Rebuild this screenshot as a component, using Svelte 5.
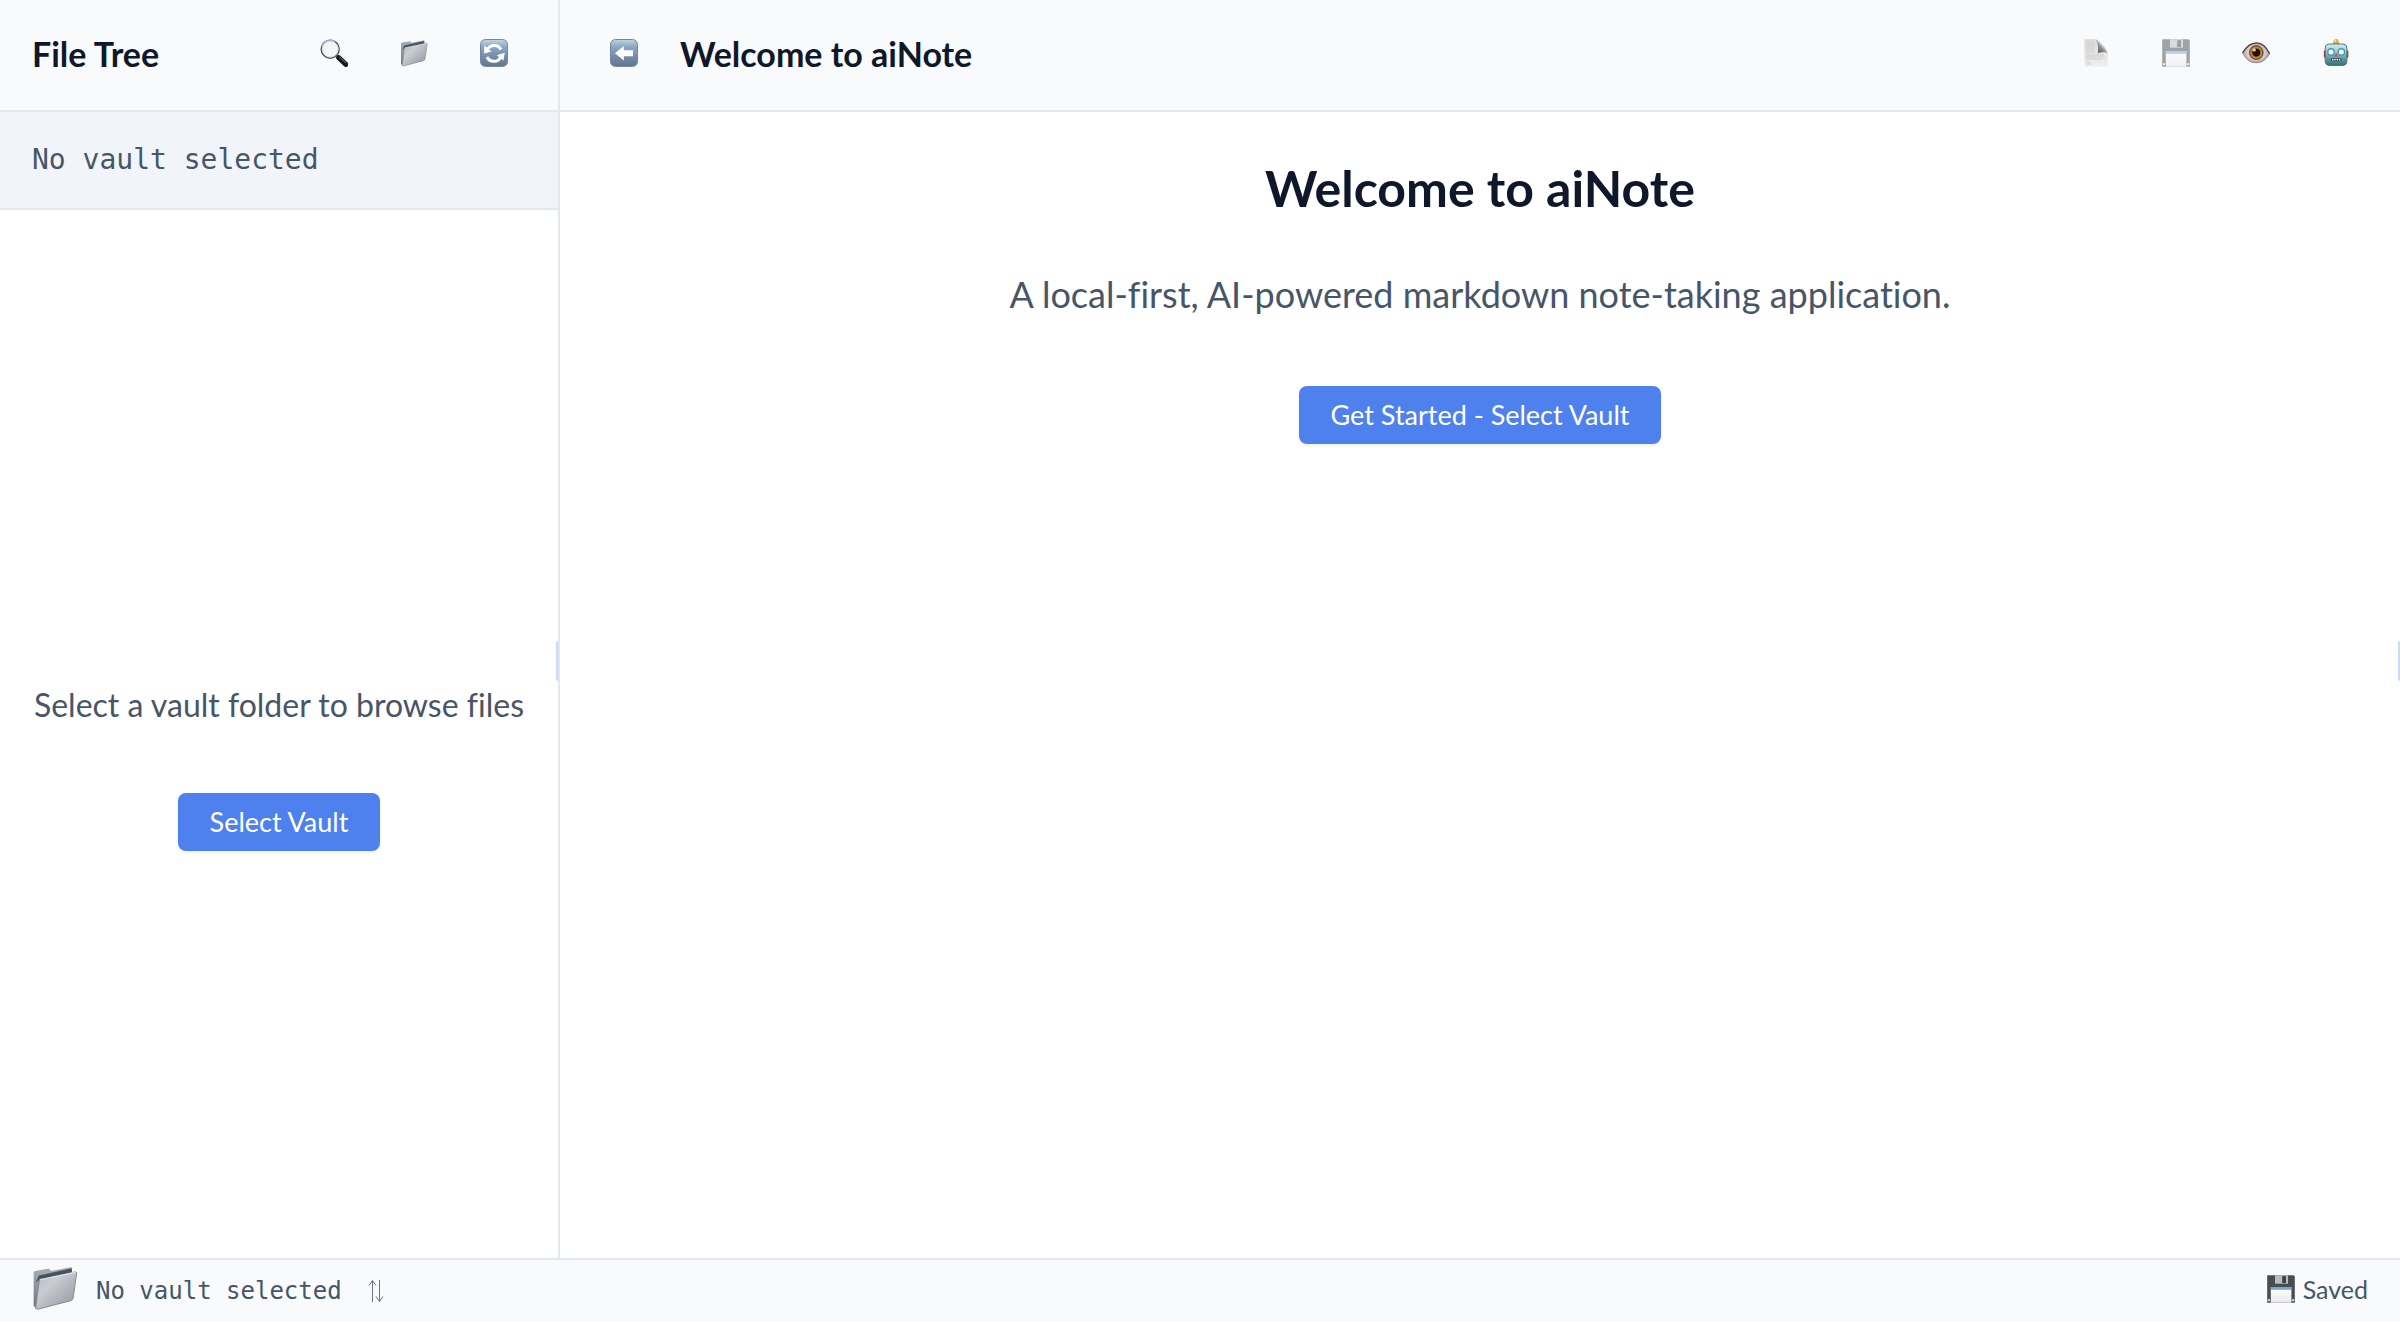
<script>
  let preview = $state(false);
</script>

<svg class="defs" aria-hidden="true">
  <defs>
    <linearGradient id="tile" x1="0" y1="0" x2="0" y2="1">
      <stop offset="0" stop-color="#c3d5e2" />
      <stop offset="0.14" stop-color="#a5bed4" />
      <stop offset="0.28" stop-color="#8ba6c5" />
      <stop offset="0.6" stop-color="#788eac" />
      <stop offset="1" stop-color="#647690" />
    </linearGradient>
    <linearGradient id="folderFront" x1="0" y1="0" x2="1" y2="1">
      <stop offset="0" stop-color="#b4b9bf" />
      <stop offset="0.35" stop-color="#c9ccd3" />
      <stop offset="1" stop-color="#8f9499" />
    </linearGradient>
    <linearGradient id="folderBack" x1="0" y1="0" x2="0" y2="1">
      <stop offset="0" stop-color="#a8b1b8" />
      <stop offset="1" stop-color="#6c757e" />
    </linearGradient>
    <linearGradient id="sheet" x1="0" y1="0" x2="0" y2="1">
      <stop offset="0" stop-color="#dcdcdc" />
      <stop offset="1" stop-color="#efefef" />
    </linearGradient>
    <linearGradient id="curl" x1="0" y1="1" x2="1" y2="0">
      <stop offset="0" stop-color="#4c4c4c" />
      <stop offset="0.45" stop-color="#8d8d8d" />
      <stop offset="0.6" stop-color="#e6e6e6" />
      <stop offset="1" stop-color="#f4f4f4" />
    </linearGradient>
    <linearGradient id="label" x1="0" y1="0" x2="0" y2="1">
      <stop offset="0" stop-color="#ffffff" />
      <stop offset="1" stop-color="#e9e9ec" />
    </linearGradient>
    <radialGradient id="eyeball">
      <stop offset="0.4" stop-color="#f5eff1" />
      <stop offset="1" stop-color="#a89ba4" />
    </radialGradient>
    <radialGradient id="iris">
      <stop offset="0.4" stop-color="#5a3510" />
      <stop offset="0.75" stop-color="#c8912a" />
      <stop offset="1" stop-color="#6b4312" />
    </radialGradient>
    <linearGradient id="robotFace" x1="0" y1="0" x2="0" y2="1">
      <stop offset="0" stop-color="#d4eeec" />
      <stop offset="0.3" stop-color="#a9cfd0" />
      <stop offset="0.7" stop-color="#5f959d" />
      <stop offset="1" stop-color="#33747c" />
    </linearGradient>
  </defs>
</svg>

{#snippet search()}
  <svg class="icon" viewBox="0 0 28 28" aria-hidden="true">
    <path d="M16.5 16.5 19.5 19.5" stroke="#777b80" stroke-width="2" />
    <path d="M18.7 18.6 25.8 25.4" stroke="#16181a" stroke-width="5" stroke-linecap="round" />
    <path d="M19.5 17.9 26 24" stroke="#74787c" stroke-width="1" />
    <circle cx="10.2" cy="10.2" r="9" fill="#f4f5f5" stroke="#50565c" stroke-width="1.5" />
    <path d="M2 7A9 9 0 0 1 15 2.5" fill="none" stroke="#9cb4cb" stroke-width="1.4" />
    <circle cx="10.2" cy="10.2" r="7.9" fill="none" stroke="#d5d8da" stroke-width="0.8" />
  </svg>
{/snippet}

{#snippet folder()}
  <svg class="icon" viewBox="0 0 28 28" aria-hidden="true">
    <path d="M1 4.3 1.8 3.6 10.6 2.2 11.5 3.7 24 1.2 24.4 4 23 22 3 26.6 1 25z" fill="url(#folderBack)" />
    <path d="M2.1 11 4.2 6.4 24.3 2 24.2 5.5 3.7 9.5z" fill="#46535e" />
    <path d="M4.5 8.9 26.4 4.2Q27.3 4.2 27.2 5.1L25 20.3Q24.8 21.3 23.9 21.6L3.4 27 2.2 26.5Z" fill="url(#folderFront)" stroke="#858d94" stroke-width="0.6" />
    <path d="M4.8 9 26.5 4.5" stroke="#e5e7e9" stroke-width="0.7" />
  </svg>
{/snippet}

{#snippet refresh()}
  <svg class="icon" viewBox="0 0 28 28" aria-hidden="true">
    <rect x="0.5" y="0.5" width="27" height="27" rx="5" fill="url(#tile)" stroke="#71869f" />
    <g fill="none" stroke="#fff" stroke-width="3">
      <path d="M7.2 11A7.6 7.6 0 0 1 21 10.6" />
      <path d="M20.8 17.8A7.6 7.6 0 0 1 7 18" />
    </g>
    <path d="M4.4 6.6 4 14.6 11.5 12.6z" fill="#fff" />
    <path d="M24.8 13.8 16.8 16.3 23.4 21.6z" fill="#fff" />
  </svg>
{/snippet}

{#snippet back()}
  <svg class="icon" viewBox="0 0 28 28" aria-hidden="true">
    <rect x="0.5" y="0.5" width="27" height="27" rx="5" fill="url(#tile)" stroke="#71869f" />
    <path d="M5 14.2 13.8 7V11.2H23V17.2H13.8V21.6z" fill="#fff" />
  </svg>
{/snippet}

{#snippet page()}
  <svg class="icon" viewBox="0 0 28 28" aria-hidden="true">
    <path d="M2.3 0.3H14.5C16.6 4.5 17 8.5 16.5 13.5L25.9 13.8V27.7H2.3z" fill="url(#sheet)" />
    <path d="M13 0.3C18 1 24 8 25.9 14.4 23.5 12.8 20 13 15.8 14.2 16.7 8 16 3 13 0.3z" fill="url(#curl)" />
    <g stroke="#c9c9c9" stroke-width="0.8">
      <path d="M4 3H11M4 5H13M4 7H13M4 9H13M4 11H12M4 13H13M4 16H22M4 18H23M4 20H21M4 23H8M4 25H10" />
    </g>
  </svg>
{/snippet}

{#snippet floppy(faded)}
  <svg class={['icon', faded && 'faded']} viewBox="0 0 28 28" aria-hidden="true">
    <path d="M0.5 0.3H26.5L27.8 1.5V27.7H0.2V0.8z" fill="#4b4c4e" />
    <rect x="8" y="0.3" width="13" height="8.4" fill="#b9bcc0" />
    <rect x="15.2" y="1.2" width="3.8" height="6.8" fill="#3e4043" />
    <rect x="3.8" y="12" width="20.6" height="15.7" fill="url(#label)" />
    <rect x="3.8" y="12" width="20.6" height="2.8" fill="#74a5e0" />
    <circle cx="2" cy="25.2" r="1.1" fill="#e8e8e8" />
    <circle cx="26.1" cy="25.2" r="1.1" fill="#e8e8e8" />
  </svg>
{/snippet}

{#snippet eye()}
  <svg class="icon" viewBox="0 0 28 28" aria-hidden="true">
    <path d="M0.4 13.5C5 6 9.5 3.7 14.5 3.7S24 7 27.7 14.5C24 21.5 19.5 24 14 24S4 21 0.4 13.5z" fill="url(#eyeball)" />
    <path d="M0.4 14.2C5 6 9.5 3.8 14.5 3.8S24 7 27.7 14.8" fill="none" stroke="#4d4044" stroke-width="1.3" />
    <path d="M1 15C5 21.5 9 23.7 14 23.7S23.5 21.5 27.3 15" fill="none" stroke="#927c82" stroke-width="0.8" />
    <circle cx="14.3" cy="13.6" r="7" fill="url(#iris)" stroke="#49300f" stroke-width="0.6" />
    <circle cx="14.3" cy="13.6" r="3.8" fill="#1d1210" />
    <circle cx="12.2" cy="10.9" r="1.6" fill="#d8d2cf" />
  </svg>
{/snippet}

{#snippet robot()}
  <svg class="icon" viewBox="0 0 28 28" aria-hidden="true">
    <rect x="1.8" y="11.3" width="3.5" height="7.5" rx="1.2" fill="#b53b37" />
    <rect x="22.9" y="11.3" width="3.5" height="7.5" rx="1.2" fill="#b53b37" />
    <rect x="11.4" y="3.2" width="5.4" height="3.6" rx="1" fill="#554680" />
    <circle cx="14.1" cy="2.7" r="2.6" fill="#efa84a" />
    <circle cx="13.4" cy="2" r="0.9" fill="#fff0a8" />
    <path d="M7 5H21Q24.9 5 24.9 9V22Q24.9 26.5 20 26.5H8Q3.2 26.5 3.2 22V9Q3.2 5 7 5z" fill="url(#robotFace)" stroke="#39747d" stroke-width="0.9" />
    <circle cx="9" cy="13" r="3.2" fill="#fff" stroke="#3c9fb5" stroke-width="1.4" />
    <circle cx="19.3" cy="13" r="3.2" fill="#fff" stroke="#3c9fb5" stroke-width="1.4" />
    <path d="M14.1 14 16 17.4H12.2z" fill="#d94a3d" />
    <rect x="8.8" y="18.9" width="10.8" height="3.4" rx="1.4" fill="#294d53" />
    <path d="M10 20.6H18.6" stroke="#f4f4f4" stroke-width="1.8" stroke-dasharray="1.4 0.9" />
  </svg>
{/snippet}

<div class="app">
  <div class="panes">
    <aside class="sidebar">
      <header class="bar">
        <h2 class="title">File Tree</h2>
        <div class="actions">
          <button class="tool" aria-label="Search">{@render search()}</button>
          <button class="tool" aria-label="Open folder">{@render folder()}</button>
          <button class="tool" aria-label="Refresh">{@render refresh()}</button>
        </div>
      </header>
      <div class="vault">No vault selected</div>
      <div class="empty">
        <p class="hint">Select a vault folder to browse files</p>
        <button class="primary">Select Vault</button>
      </div>
      <div class="grip"></div>
    </aside>

    <main class="editor">
      <header class="bar">
        <div class="lead">
          <button class="tool" aria-label="Back">{@render back()}</button>
          <h2 class="title">Welcome to aiNote</h2>
        </div>
        <div class="actions">
          <button class="tool" aria-label="New note">{@render page()}</button>
          <button class="tool" aria-label="Save" disabled>{@render floppy(true)}</button>
          <button class="tool" aria-label="Preview" aria-pressed={preview} onclick={() => (preview = !preview)}>{@render eye()}</button>
          <button class="tool" aria-label="AI assistant">{@render robot()}</button>
        </div>
      </header>
      <section class="welcome">
        <h1>Welcome to aiNote</h1>
        <p>A local-first, AI-powered markdown note-taking application.</p>
        <button class="primary">Get Started - Select Vault</button>
      </section>
      <div class="grip"></div>
    </main>
  </div>

  <footer class="status">
    <div class="current">
      <span class="big">{@render folder()}</span>
      <span class="name">No vault selected</span>
      <button class="switch" aria-label="Switch vault">
        <svg viewBox="0 0 16 24" aria-hidden="true">
          <path d="M4.5 23V2M1 6.5 4.5 1.5 8 6.5M11.5 1V22M8 17.5 11.5 22.5 15 17.5" fill="none" stroke="#64748b" stroke-width="1" />
        </svg>
      </button>
    </div>
    <div class="saved">{@render floppy(false)}<span>Saved</span></div>
  </footer>
</div>

<style>
  :global(body) {
    margin: 0;
    background: #fff;
  }
  .defs {
    position: absolute;
    width: 0;
    height: 0;
  }
  .app {
    display: flex;
    flex-direction: column;
    min-height: 100vh;
    font-family: Avenir, Lato, sans-serif;
    font-variant-ligatures: none;
    color: #475569;
    background: #fff;
  }
  .app * {
    box-sizing: border-box;
  }
  h1,
  h2,
  p {
    margin: 0;
  }
  button {
    border: 0;
    font-family: inherit;
    cursor: pointer;
  }
  .panes {
    flex: 1;
    display: flex;
  }
  .sidebar {
    position: relative;
    flex: 0 0 560px;
    display: flex;
    flex-direction: column;
    border-right: 2px solid #e2e8f0;
  }
  .editor {
    position: relative;
    flex: 1;
    min-width: 0;
  }
  .bar {
    display: flex;
    align-items: center;
    justify-content: space-between;
    height: 112px;
    padding: 0 32px 2px;
    background: #f8fafc;
    border-bottom: 2px solid #e2e8f0;
  }
  .title {
    font-size: 34px;
    line-height: 44px;
    font-weight: 700;
    color: #0f172a;
  }
  .lead {
    display: flex;
    align-items: center;
    gap: 24px;
  }
  .actions {
    display: flex;
    gap: 16px;
  }
  .tool {
    display: flex;
    align-items: center;
    justify-content: center;
    width: 64px;
    height: 56px;
    padding: 0 0 2px;
    background: transparent;
  }
  .icon {
    display: block;
    width: 28px;
    height: 28px;
  }
  .faded {
    opacity: 0.5;
  }
  .vault {
    padding: 28px 32px;
    font-family: 'DejaVu Sans Mono', monospace;
    font-size: 28px;
    line-height: 40px;
    background: #f1f5f9;
    border-bottom: 2px solid #e2e8f0;
  }
  .empty {
    flex: 1;
    display: flex;
    flex-direction: column;
    align-items: center;
    justify-content: center;
    gap: 64px;
    padding: 64px 16px 0;
  }
  .hint {
    font-size: 32px;
    line-height: 48px;
    white-space: nowrap;
  }
  .primary {
    height: 58px;
    padding: 0 32px;
    border-radius: 8px;
    font-size: 27px;
    line-height: 36px;
    color: #fff;
    background: #4f81ee;
    box-shadow: 0 2px 4px rgb(0 0 0 / 6%);
  }
  .welcome {
    display: flex;
    flex-direction: column;
    align-items: center;
    padding: 48px 64px;
    text-align: center;
  }
  .welcome h1 {
    font-size: 50px;
    line-height: 56px;
    color: #0f172a;
  }
  .welcome p {
    margin: 50px 0 64px;
    font-size: 36px;
    line-height: 56px;
  }
  .grip {
    position: absolute;
    right: 0;
    bottom: calc(50% - 52px);
    width: 2px;
    height: 40px;
    border-radius: 2px 0 0 2px;
    background: #c9dafb;
  }
  .status {
    display: flex;
    align-items: center;
    justify-content: space-between;
    height: 64px;
    padding: 0 32px;
    background: #f8fafc;
    border-top: 2px solid #e2e8f0;
  }
  .current,
  .saved {
    display: flex;
    align-items: center;
  }
  .big {
    padding-bottom: 6px;
  }
  .big :global(.icon) {
    width: 46px;
    height: 46px;
  }
  .name {
    margin-left: 18px;
    font-family: 'DejaVu Sans Mono', monospace;
    font-size: 24px;
    line-height: 32px;
  }
  .switch {
    margin-left: 26px;
    padding: 0;
    background: transparent;
  }
  .switch svg {
    display: block;
    width: 16px;
    height: 24px;
  }
  .saved {
    gap: 8px;
    padding-bottom: 4px;
    font-size: 25px;
    line-height: 32px;
  }
</style>
